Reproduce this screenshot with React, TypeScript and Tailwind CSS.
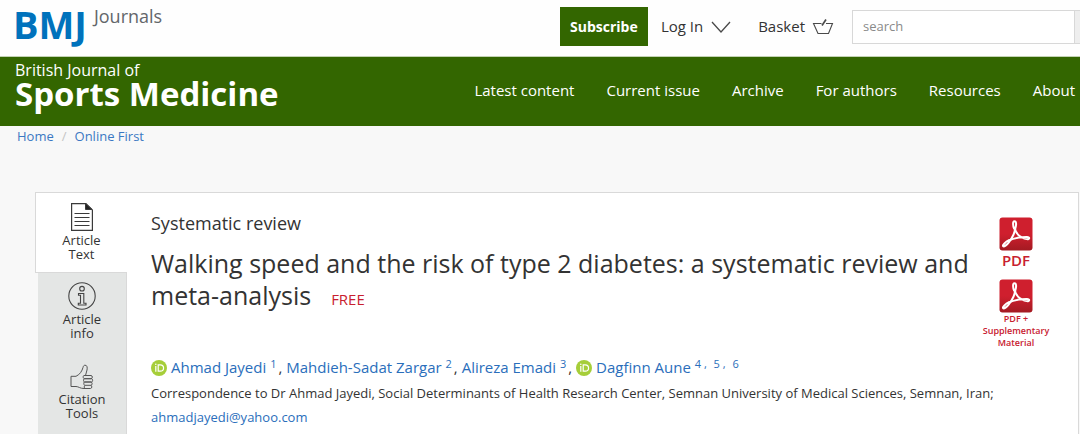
import React from 'react';

type Author = { name: string; refs: string[]; orcid?: boolean };

const NAV_ITEMS = ['Latest content', 'Current issue', 'Archive', 'For authors', 'Resources', 'About'];

const AUTHORS: Author[] = [
  { name: 'Ahmad Jayedi', refs: ['1'], orcid: true },
  { name: 'Mahdieh-Sadat Zargar', refs: ['2'] },
  { name: 'Alireza Emadi', refs: ['3'] },
  { name: 'Dagfinn Aune', refs: ['4', '5', '6'], orcid: true },
];

const ChevronIcon = () => (
  <svg width="20" height="14" viewBox="0 0 20 14" fill="none" stroke="#4a4a4a" strokeWidth="1.3" aria-hidden="true">
    <path d="M1 2 10 12 19 2" />
  </svg>
);

const BasketIcon = () => (
  <svg width="22" height="18" viewBox="0 0 22 18" fill="none" stroke="#4a4a4a" strokeWidth="1.1" aria-hidden="true">
    <path d="M9.500 5.500H1.500L6 15.500H16.500L20.500 5.500H14" />
    <path d="M10 7.500 14 1.500" strokeWidth="1.700" />
  </svg>
);

const ArticleIcon = () => (
  <svg width="22" height="28" viewBox="0 0 22 28" fill="none" stroke="#3a3a3a" aria-hidden="true">
    <path d="M.6.600H15L21.400 7V27.400H.6Z" strokeWidth="1.200" />
    <path d="M14.500.6V6.500H21Z" fill="#222" />
    <path d="M3.500 10.500H18.500M3.500 14.500H18.500M3.500 18.500H18.500M3.500 22.500H18.500" strokeWidth="1.200" />
  </svg>
);

const InfoIcon = () => (
  <svg width="28" height="28" viewBox="0 0 28 28" fill="none" stroke="#444" strokeWidth="1.100" aria-hidden="true">
    <circle cx="14" cy="14" r="13.200" />
    <circle cx="14" cy="6.700" r="2.300" />
    <path d="M10.500 11.500H15.800V21.300H18V23H10.300V21.300H12.500V13.200H10.500Z" />
  </svg>
);

const ThumbIcon = () => (
  <svg width="24" height="26" viewBox="0 0 24 26" fill="none" stroke="#555" strokeWidth="1" strokeLinejoin="round" aria-hidden="true">
    <path d="M1 12.300H6C10 10.500 12 7 13 3.500C13.300 2 14 1.200 15 1.200C17.200 1.200 17.500 3.500 17 6L15.500 11.500" />
    <path d="M1 12.300V22.500H6C8.500 22.500 10 24.500 14 24.500H20.500C22 24.500 22.300 21.800 21 21.300" />
    <path d="M14 11.500H21C22.800 11.500 22.800 14.700 21 14.700H14.500C12.800 14.700 12.800 11.500 14 11.500Z" />
    <path d="M14.500 14.700H21.500C23 14.700 23 18 21.500 18H14.500C13.200 18 13.200 14.700 14.500 14.700ZM14.500 18H21C22.500 18 22.500 21.300 21 21.300H15C13.500 21.300 13.500 18 14.500 18ZM15 21.300C14 21.600 14 24 15 24.500" />
  </svg>
);

const PdfIcon = () => (
  <svg width="34" height="34" viewBox="0 0 34 34" fill="none" aria-hidden="true">
    <defs>
      <linearGradient id="pdfRed" x1="0" y1="0" x2="0" y2="1">
        <stop offset="0.5" stopColor="#cf1f2e" />
        <stop offset="1" stopColor="#a31a22" />
      </linearGradient>
    </defs>
    <rect x=".5" y=".5" width="33" height="33" rx="3" fill="url(#pdfRed)" />
    <g stroke="#fff" strokeWidth="2" strokeLinejoin="round">
      <path d="M15.300 12C13.800 9 13.500 4.200 15.500 4.200S17.500 8 16.200 12" />
      <path d="M15.700 11C16.500 14.500 18.800 18.500 23 20.500C26 22.200 30.200 22.900 30.200 21.200S26.500 19.800 23 20.200C18.500 20.600 13.500 21.800 9.500 23.500" />
      <path d="M16 11C16.200 15.500 13.500 20.500 9.800 25.300C7.800 28 5 30.300 4.100 29.200S6.500 24.900 10 23.200" />
    </g>
  </svg>
);

const OrcidIcon = () => (
  <svg width="16" height="16" viewBox="0 0 16 16" className="mr-1 inline-block align-[-3px]" role="img" aria-label="ORCID">
    <circle cx="8" cy="8" r="8" fill="#a6ce39" />
    <path d="M4.800 6V11.800" stroke="#fff" strokeWidth="1.200" />
    <circle cx="4.800" cy="4.200" r=".8" fill="#fff" />
    <path d="M7.200 4.800H9.200C13.700 4.800 13.700 11.200 9.200 11.200H7.200Z" fill="none" stroke="#fff" strokeWidth="1.200" />
  </svg>
);

const TABS = [
  { lines: ['Article', 'Text'], icon: <ArticleIcon />, active: true },
  { lines: ['Article', 'info'], icon: <InfoIcon />, active: false },
  { lines: ['Citation', 'Tools'], icon: <ThumbIcon />, active: false },
];

const Header = () => (
  <header>
    <div className="flex h-14 items-start justify-between bg-[#fefefe] pl-[13px]">
      <a href="#" className="flex items-start">
        <span className="text-[38px] leading-[48px] font-bold text-[#0072bc]">BMJ</span>
        <span className="ml-[7px] mt-1 text-lg leading-6 text-[#63666a]">Journals</span>
      </a>
      <div className="flex shrink-0 items-center pt-[7px] text-[15px] text-[#333]">
        <button className="h-[39px] w-[88px] bg-[#336600] text-sm font-bold text-white">Subscribe</button>
        <button className="ml-[13px] flex items-center gap-2">
          Log In
          <ChevronIcon />
        </button>
        <a href="#" className="ml-[27px] flex items-center gap-[7px]">
          Basket
          <BasketIcon />
        </a>
        <form className="ml-[18px] flex h-[34px]">
          <input
            type="search"
            aria-label="Search"
            placeholder="search"
            className="w-[223px] border border-[#d8d8d8] bg-white px-[10px] text-[13px] outline-none placeholder:text-[#8a8a8a]"
          />
          <button type="button" aria-label="Go" className="w-[5px] border-y border-[#d8d8d8] bg-[#eee]" />
        </form>
      </div>
    </div>
    <div className="flex h-[70px] items-center justify-between border-t border-[#c3d2b4] bg-[#336600] pr-[5px] pl-[15px] text-white">
      <a href="#" className="flex flex-col self-start pt-1">
        <span className="text-base leading-[18px]">British Journal of</span>
        <span className="text-[33px] leading-[30px] font-bold">Sports Medicine</span>
      </a>
      <nav className="flex gap-8 pb-[2px] text-[15px]">
        {NAV_ITEMS.map(item => (
          <a key={item} href="#" className="whitespace-nowrap">{item}</a>
        ))}
      </nav>
    </div>
  </header>
);

const App: React.FC = () => {
  return (
    <div className="flex min-h-screen flex-col overflow-hidden bg-[#f8f8f8] font-['Open_Sans',sans-serif] text-[#333]">
      <Header />

      <nav aria-label="Breadcrumb" className="flex gap-2 px-[17px] text-[13px] leading-5 text-[#3b78c3]">
        <a href="#">Home</a>
        <span className="text-[#c4c4c4]">/</span>
        <a href="#">Online First</a>
      </nav>

      <main className="mt-[46px] mr-px ml-[35px] flex flex-1">
        <div className="flex w-[92px] shrink-0 flex-col">
          {TABS.map(tab => (
            <button
              key={tab.lines.join(' ')}
              className={
                tab.active
                  ? 'flex h-[81px] flex-col items-center border border-r-0 border-[#d9d9d9] bg-white pt-[10px] text-[13px] leading-[14px]'
                  : 'ml-[3px] flex h-20 flex-col items-center border-r border-[#d9d9d9] bg-[#e4e6e5] pt-[9px] text-[13px] leading-[14px]'
              }
            >
              <span className="mb-[2px] flex h-7 items-end">{tab.icon}</span>
              <span>{tab.lines[0]}</span>
              <span>{tab.lines[1]}</span>
            </button>
          ))}
          <div className="ml-[3px] flex-1 border-r border-[#d9d9d9] bg-[#e4e6e5]" />
        </div>

        <article className="flex min-w-0 flex-1 items-start justify-between border-t border-r border-[#d9d9d9] bg-white pl-6">
          <div className="min-w-0 flex-1 pt-[18px]">
            <p className="text-lg leading-6">Systematic review</p>
            <h1 className="mt-3 text-[25px] leading-8">
              Walking speed and the risk of type 2 diabetes: a systematic review and meta-analysis
              <span className="ml-5 text-[15px] text-[#c8202f]">FREE</span>
            </h1>
            <p className="mt-10 text-[15px] leading-6 whitespace-nowrap">
              {AUTHORS.map((author, i) => (
                <React.Fragment key={author.name}>
                  {i > 0 && ', '}
                  {author.orcid && <OrcidIcon />}
                  <a href="#" className="text-[#2a6ebb]">{author.name}</a>{' '}
                  <sup className="mr-[2px] text-[11px] text-[#2a6ebb]">
                    {author.refs.map((ref, n) => (
                      <span key={ref} className={n > 0 ? 'ml-1' : ''}>
                        {ref}
                        {n < author.refs.length - 1 && ' , '}
                      </span>
                    ))}
                  </sup>
                </React.Fragment>
              ))}
            </p>
            <p className="mt-[2px] text-[13px] leading-6 whitespace-nowrap">
              Correspondence to Dr Ahmad Jayedi, Social Determinants of Health Research Center, Semnan University of Medical Sciences, Semnan, Iran;
            </p>
            <p className="text-[13px] leading-6">
              <a href="#" className="text-[#2a6ebb]">ahmadjayedi@yahoo.com</a>
            </p>
          </div>

          <aside className="mr-[27px] flex w-[70px] shrink-0 flex-col items-center pt-6 text-center text-[#c8202f]">
            <a href="#" className="flex flex-col items-center text-[15px] leading-[18px] font-semibold">
              <PdfIcon />
              PDF
            </a>
            <a href="#" className="mt-[10px] flex flex-col items-center text-[9px] leading-3 font-semibold">
              <PdfIcon />
              <span>PDF +</span>
              <span>Supplementary</span>
              <span>Material</span>
            </a>
          </aside>
        </article>
      </main>
    </div>
  );
};

export default App;
